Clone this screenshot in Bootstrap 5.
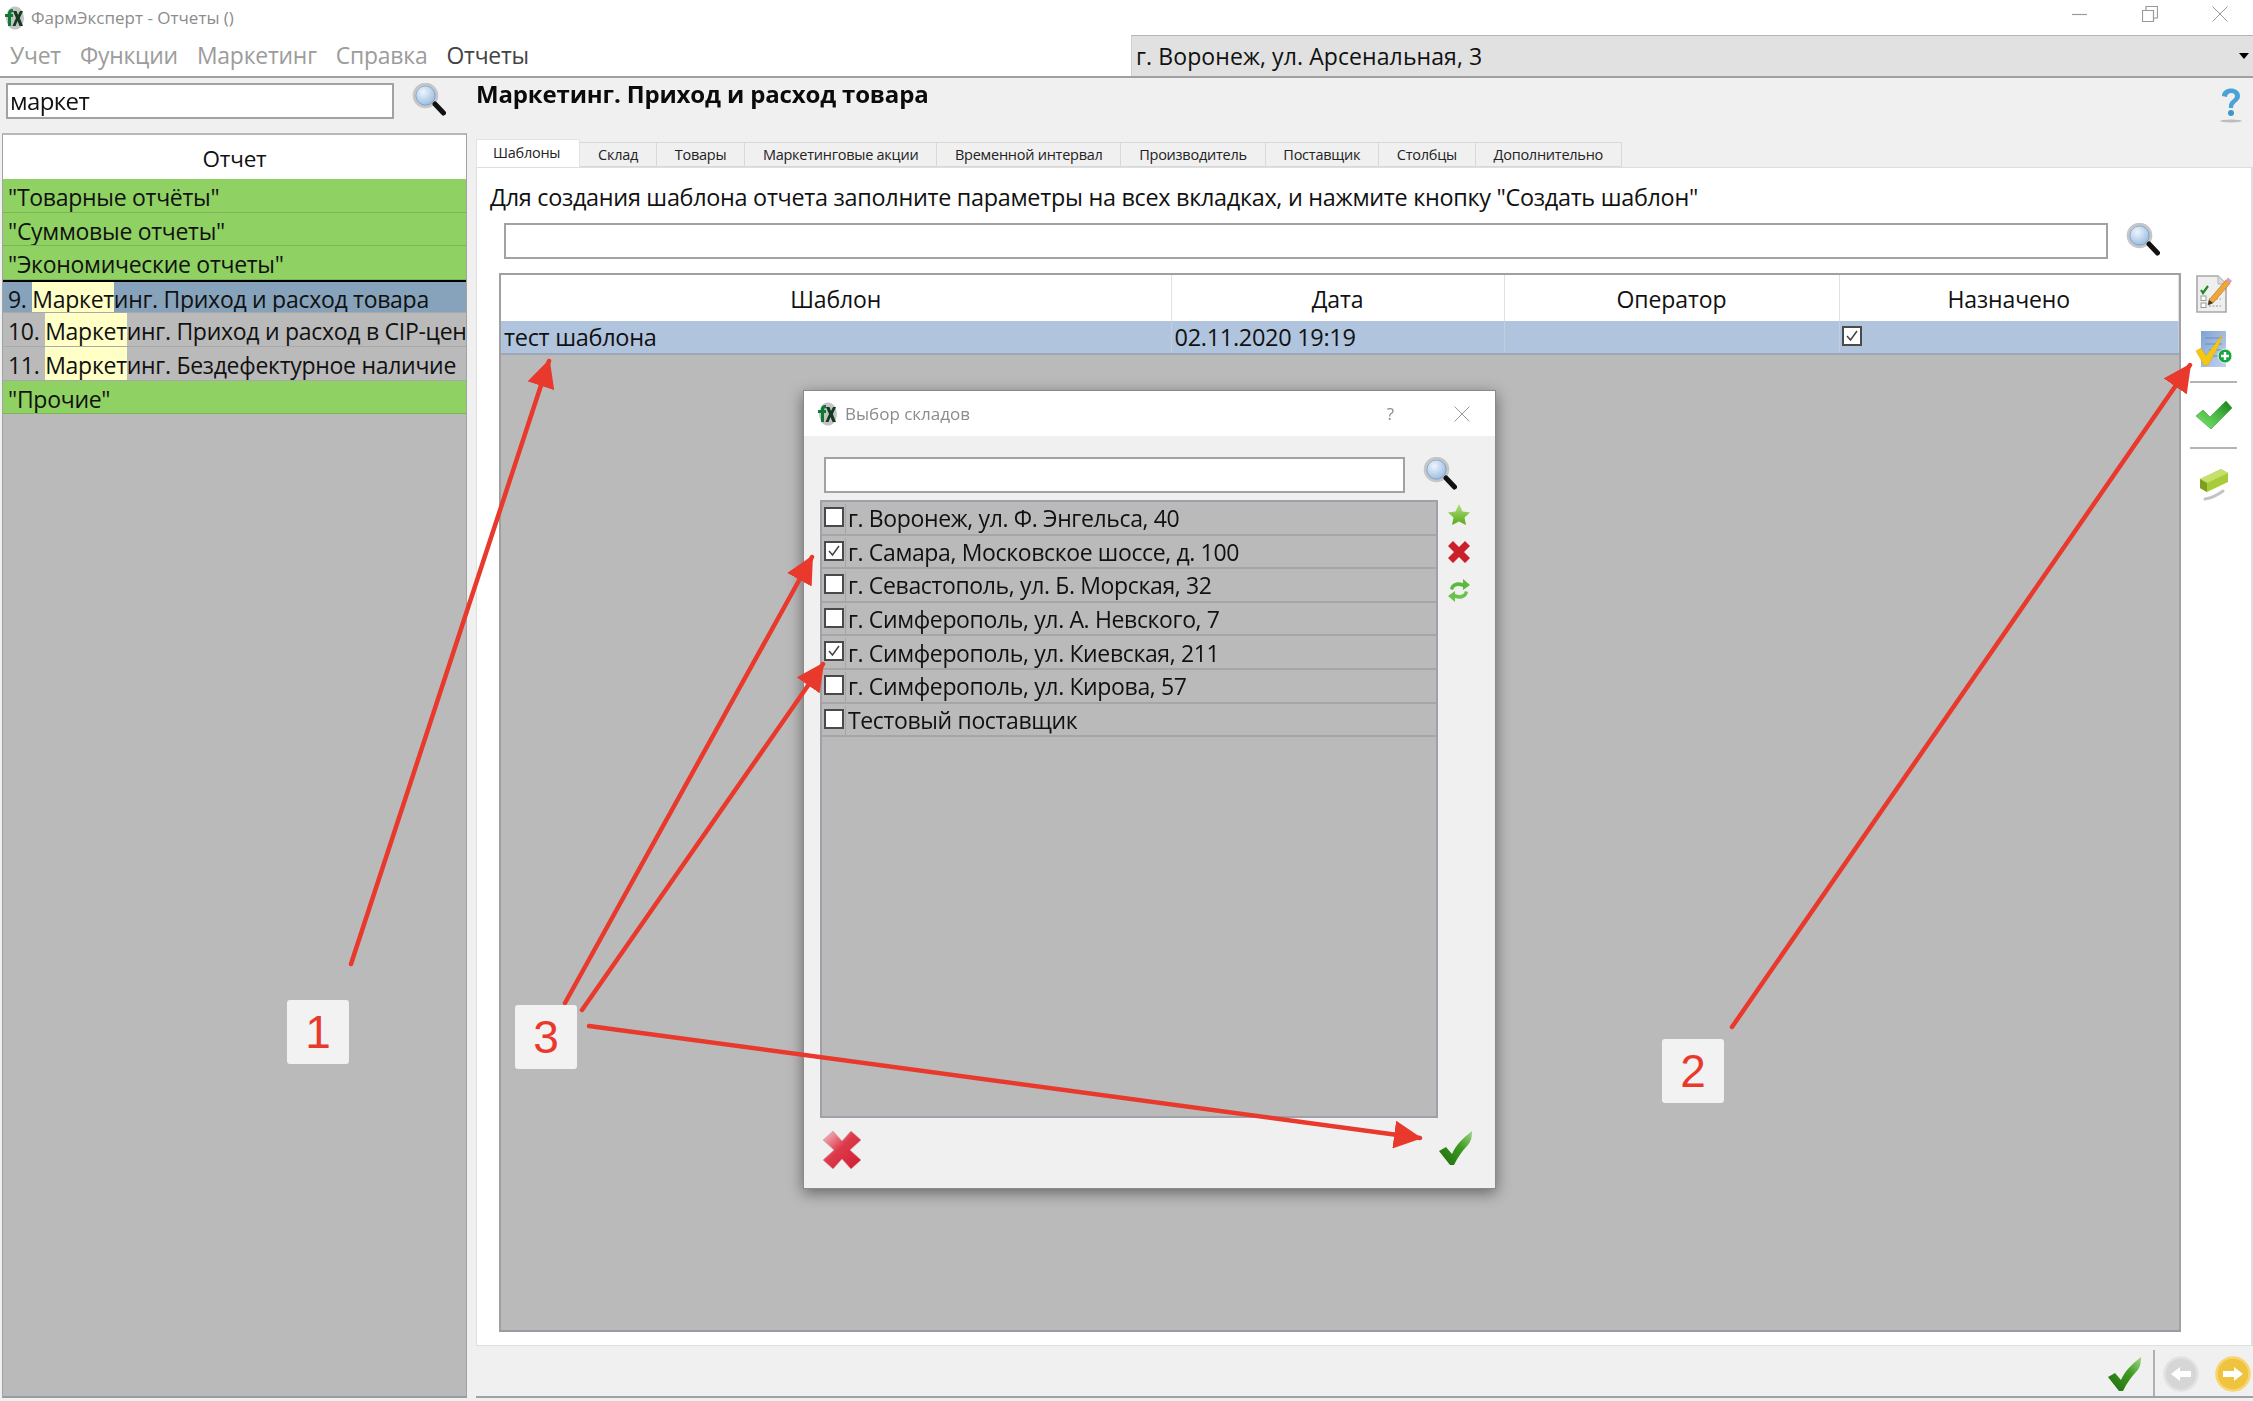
<!DOCTYPE html>
<html lang="ru">
<head>
<meta charset="utf-8">
<title>ФармЭксперт - Отчеты ()</title>
<link href="https://cdn.jsdelivr.net/npm/bootstrap@5.3.0/dist/css/bootstrap.min.css" rel="stylesheet">
<script src="https://cdn.jsdelivr.net/npm/bootstrap@5.3.0/dist/js/bootstrap.bundle.min.js"></script>
<style>
html,body{margin:0;background:#f0f0f0;overflow:hidden}
body{width:2253px;height:1401px;position:relative;font-family:"Open Sans","Noto Sans",sans-serif;color:#111;font-size:23px;letter-spacing:-.35px}
.win{width:2253px;height:1401px;filter:blur(.4px)}
.ttl{height:35px;background:#fff;padding-left:4px;color:#8c8c8c;font-size:17px;letter-spacing:0}
.ttl .logo{width:20px;height:24px;margin-right:7px}
.capbtn{width:16px;height:16px;display:block;margin-left:54px}
.capbtns{margin-right:25px;margin-top:-8px}
.menu-row{height:43px;background:#fff;border-bottom:2px solid #a0a0a0}
.menu-left{width:1131px;padding-left:10px;gap:19px;color:#9c9c9c;font-size:22.9px;letter-spacing:-.2px;padding-top:1px}
.menu-left .on{color:#444}
.combo{flex:1;background:#e1e1e1;padding-left:4px;font-size:23px;letter-spacing:.1px;color:#111;border-left:1px solid #d0d0d0;border-top:1px solid #b4b4b4}
.combo i{width:0;height:0;border:5px solid transparent;border-top:6px solid #000;border-bottom:0;margin-right:4px}
.side{width:468px;flex:none}
.side-top{height:55px;padding:5px 0 0 6px;gap:18px}
.inp{border:2px solid #a2a2a2;background:#fff;border-radius:0;height:36px;padding:0 2px;font-size:24px;color:#111;box-shadow:none;letter-spacing:-.6px}
.side-top .inp{width:388px}
.mag{width:34px;height:34px;flex:none;display:block}
.rep{margin:0 1px 0 2px;height:1265px;background:#bababa;border:1px solid #a2a2a2;border-bottom:2px solid #9a9aa2;border-radius:0;overflow:hidden;border-top:2px solid #b8b8b8;display:block}
.rep-h{height:44px;background:#fff;color:#111;text-align:center;font-size:22.5px;line-height:48px;letter-spacing:-.2px}
.rep .list-group-item{height:33.6px;line-height:36px;padding:0 0 0 5px;border:0;border-bottom:1px solid #a9a9a9;border-radius:0;background:#bababa;color:#111;white-space:nowrap;overflow:hidden;font-size:23px;letter-spacing:-.28px}
.rep .list-group-item.grp{background:#8fd162;border-bottom-color:#7db658}
.rep .list-group-item.sel{background:#87a3bb;border-top:2px solid #000;color:#111;line-height:34px}
.hl{background:#ffffc6;display:inline-block;height:33px;vertical-align:top}
.main{flex:1;min-width:0;padding-left:8px}
.head-row{height:61px}
.h-ttl{font-size:24px;font-weight:700;letter-spacing:-.15px;margin:0;line-height:24px;padding-top:4px;color:#0b0b0b}
.help{width:24px;height:36px;margin:9px 10px 0 0;display:block}
.tabs{border:0;height:28px;align-items:flex-end;background:transparent;flex-wrap:nowrap}
.tabs .nav-link{height:25px;margin:0;padding:0 17.8px;border:1px solid #d9d9d9;border-width:1px 1px 1px 0;border-radius:0;background:#f0f0f0;color:#222;font-size:14.5px;line-height:24px;letter-spacing:-.25px}
.tabs .nav-link.active{height:28px;background:#fff;border:1px solid #e3e3e3;border-bottom:0;color:#222;line-height:26px;padding:0 19px 0 16px}
.pane{height:1179px;background:#fff;border:1px solid #dedede;border-width:1px 2px 1px 1px;margin-top:0}
.hint{padding:14px 0 0 13px;font-size:23.4px;line-height:31px;letter-spacing:-.29px;height:55px;color:#111}
.srch{padding-left:27px;gap:18px;height:50px}
.srch .inp{width:1604px}
.grid-row{flex:1;min-height:0;padding-left:22px}
.gridbox{width:1682px;height:1059px;background:#bababa;border:2px solid #a0a0a0;border-bottom-color:#9a9aa2;border-right-color:#a0a0a6}
.tb{table-layout:fixed;margin:0;width:100%;--bs-table-bg:transparent;border-collapse:collapse;font-size:23.5px}
.tb th{height:46px;background:#fff;font-weight:400;text-align:center;vertical-align:middle;padding:2px 0 0;border:0;border-right:1px solid #e2e2e2;color:#111;letter-spacing:-.1px;font-size:23px;box-shadow:none}
.tb td{height:33px;padding:0 0 0 3px;background:#b0c4de;border:0;border-bottom:2px solid #9ca8b8;border-right:1px solid #c2cede;vertical-align:middle;color:#111;letter-spacing:-.3px;line-height:30px;box-shadow:none}
.tb td .ckb{margin:-2px 0 0 -1px}
.ckb{display:block;width:20px;height:20px;background:#fff;border:2px solid #4a4a4a;position:relative}
.ckb svg{display:block;width:16px;height:16px}
.tools{width:70px;align-items:center;padding:2px 5px 0 0}
.tools svg{display:block}
.tools hr{width:47px;margin:0;border:0;border-top:2px solid #b4b4b4;opacity:1}
.t-a{margin-top:17px}
.tools .t-h{margin-top:13px}
.t-c{margin:18px 0}
.tools .t-j{margin-top:0}
.t-e{margin-top:19px}
.foot{height:52px;border-bottom:2px solid #a0a0a8;padding:6px 2px 0 0}
.foot .vs{width:2px;height:46px;background:#b0b0b0;align-self:flex-end;margin:0 8px 0 11px}
.dlg{position:absolute;left:803px;top:390px;width:693px;height:799px;background:#f0f0f0;border:1px solid #8a8a8a;box-shadow:0 4px 14px rgba(0,0,0,.45);border-radius:0;z-index:5;filter:blur(.4px)}
.dlg-t{height:45px;background:#fff;color:#8c8c8c;font-size:17px;padding-left:13px;letter-spacing:0}
.dlg-t .logo{width:20px;height:24px;margin-right:8px}
.q{margin-right:60px}
.x-close{margin-right:25px}
.dlg-b{flex:1;padding:21px 0 0 16px}
.dlg-s{gap:18px;padding-left:4px;height:43px}
.dlg-s .inp{width:581px}
.dlg-m{gap:10px}
.wh{width:618px;height:618px;background:#bababa;border:2px solid #a0a0a8;display:block;border-radius:0}
.wh .list-group-item{height:33.6px;padding:2px 0 0;border:0;border-bottom:2px solid #a6a6a6;border-radius:0;background:transparent;color:#111;line-height:31px;white-space:nowrap;font-size:23px;letter-spacing:-.36px}
.wh .cc{width:24px;height:100%;border-right:1px solid #a6a6a6;padding:3px 0 0 2px;margin:0 2px 0 0;flex:none}
.wh-ic{gap:15px;padding-top:4px;width:24px}
.wh-ic svg{display:block}
.dlg-f{padding:13px 0 0 3px;width:653px}
.note{position:absolute;z-index:8;width:62px;height:64px;background:#f2f2f2;border-radius:3px;color:#e8392c;font-family:"Liberation Sans",Arial,sans-serif;font-size:46px;line-height:64px;text-align:center;letter-spacing:0}
.n1{left:287px;top:1000px}.n2{left:1662px;top:1039px}.n3{left:515px;top:1005px}
.arrows{position:absolute;left:0;top:0;z-index:7;pointer-events:none}
</style>
</head>
<body>
<svg width="0" height="0" style="position:absolute">
<defs>
<radialGradient id="gl" cx=".4" cy=".35" r=".7"><stop offset="0" stop-color="#eef5fc"/><stop offset="1" stop-color="#8db2dc"/></radialGradient>
<linearGradient id="gc" x1="0" y1="1" x2="1" y2="0"><stop offset="0" stop-color="#7fe86f"/><stop offset=".6" stop-color="#43b33f"/><stop offset="1" stop-color="#167a18"/></linearGradient>
<linearGradient id="gd" x1="0" y1="1" x2="1" y2="0"><stop offset="0" stop-color="#1b6a0c"/><stop offset=".6" stop-color="#3f9c20"/><stop offset="1" stop-color="#a4d68e"/></linearGradient>
<linearGradient id="gx" x1="0" y1="0" x2="1" y2="1"><stop offset="0" stop-color="#f6c8cf"/><stop offset=".45" stop-color="#dd3a4c"/><stop offset="1" stop-color="#d01c30"/></linearGradient>
<linearGradient id="gs" x1="0" y1="0" x2="0" y2="1"><stop offset="0" stop-color="#b3e27a"/><stop offset="1" stop-color="#58a81c"/></linearGradient>
<linearGradient id="gb" x1="0" y1="0" x2="1" y2="1"><stop offset="0" stop-color="#7ea3d0"/><stop offset="1" stop-color="#c3d2f2"/></linearGradient>
<symbol id="i-mag" viewBox="0 0 34 34"><circle cx="13.5" cy="12.5" r="11.5" fill="url(#gl)" stroke="#c6c6c6" stroke-width="2.6"/><circle cx="13.5" cy="12.5" r="9.6" fill="none" stroke="#7f9cc0" stroke-width=".8"/><path d="M23 21 L31.5 30" stroke="#111" stroke-width="5" stroke-linecap="round"/></symbol>
<symbol id="i-logo" viewBox="0 0 20 24"><ellipse cx="11" cy="12" rx="9" ry="11.5" fill="#c4c4c4"/><path d="M1 8 L4 8 C4 4 6 3 9 3 L9 6 C7.500 6 7 7 7 8 L9 8 L9 11 L7 11 L7 20 L4 20 L4 11 L1 11 Z" fill="#0e7a35"/><path d="M9 5 L12.500 5 L14 9 L16 5 L19 5 L15.800 12 L19 20 L15.500 20 L13.500 15 L11.500 20 L8.500 20 L12 12 Z" fill="#143a20"/></symbol>
<symbol id="i-chk" viewBox="0 0 36 28"><path d="M0 15 L7 9 L14 16 L30 0 L36 7 L15 28 Z" fill="url(#gc)" stroke="#3a9a38" stroke-width=".6"/></symbol>
<symbol id="i-chk2" viewBox="0 0 34 34"><path d="M0 20 L7 16 L13 23 C17 14 24 7 33 0 C33 7 32 11 28 15 C23 20 19 26 15 34 L11 34 Z" fill="url(#gd)"/></symbol>
<symbol id="i-x" viewBox="0 0 22 22"><path d="M0 5 L5 0 L11 6 L17 0 L22 5 L16 11 L22 17 L17 22 L11 16 L5 22 L0 17 L6 11 Z" fill="#cc1f2c"/></symbol>
<symbol id="i-xb" viewBox="0 0 38 38"><path d="M0 9 L10 0 L19 10 L28 0 L38 9 L27 19 L38 29 L28 38 L19 28 L10 38 L0 29 L11 19 Z" fill="url(#gx)" stroke="#c9a0a6" stroke-width=".6"/></symbol>
<symbol id="i-star" viewBox="0 0 22 22"><path d="M11 0 L14.500 7.500 L22 8.500 L16.500 13.500 L18 21 L11 17.500 L4 21 L5.500 13.500 L0 8.500 L7.500 7.500 Z" fill="url(#gs)"/></symbol>
<symbol id="i-ref" viewBox="0 0 22 25"><path d="M2 11 C3 5 9 3 15 5 L15 1 L22 7 L15 12 L15 9 C10 7 6 8 5 12 Z" fill="#5db83e"/><path d="M20 14 C19 20 13 22 7 20 L7 24 L0 18 L7 13 L7 16 C12 18 16 17 17 13 Z" fill="#6cc24a"/></symbol>
<symbol id="i-edit" viewBox="0 0 36 38"><path d="M1 1 L22 1 L30 9 L30 37 L1 37 Z" fill="#efefef" stroke="#a8a8a8" stroke-width="1.600"/><path d="M22 1 L22 9 L30 9" fill="#dcdcdc" stroke="#b2b2b2"/><path d="M5 15 L7 18 L12 11" fill="none" stroke="#1d8a1f" stroke-width="2.200"/><rect x="5" y="21" width="5" height="4.500" fill="#fff" stroke="#999"/><rect x="5" y="28" width="5" height="4.500" fill="#fff" stroke="#999"/><path d="M13 24 H25 M13 31 H25" stroke="#999" stroke-dasharray="2 1.500"/><path d="M13 25 L30 5 L34 8.500 L17 28 L12 30 Z" fill="#f0a73a" stroke="#a8701c" stroke-width=".6"/><path d="M30 5 L32 2.500 L36 6 L34 8.500 Z" fill="#d89ac8"/><path d="M12 30 L13 25 L17 28 Z" fill="#333"/></symbol>
<symbol id="i-add" viewBox="0 0 36 38"><path d="M5 1 L30 1 L30 37 L5 37 Z" fill="url(#gb)"/><path d="M9 8 H26 M9 14 H26 M13 20 H26 M17 26 H26" stroke="#6d8db8"/><path d="M0 21 L5 18 L10 26 L26 5 C25 13 18 24 12 35 L8 35 Z" fill="#f5c715" stroke="#e0a800" stroke-width=".5"/><circle cx="29" cy="26" r="7" fill="#19a53d" stroke="#e9f8ec"/><path d="M25 26 H33 M29 22 V30" stroke="#fff" stroke-width="2.400"/></symbol>
<symbol id="i-erase" viewBox="0 0 30 33"><path d="M1 11 L22 1 L29 5 L29 14 L8 24 L1 20 Z" fill="#a8cc38"/><path d="M1 11 L22 1 L29 5 L8 15 Z" fill="#c6e070"/><path d="M1 11 L8 15 L8 24 L1 20 Z" fill="#7da020"/><path d="M6 31 C12 30 20 26 24 23" stroke="#c4c4c4" stroke-width="3" fill="none" stroke-linecap="round"/></symbol>
<marker id="ah" markerUnits="userSpaceOnUse" markerWidth="28" markerHeight="28" refX="26" refY="14" orient="auto"><path d="M0 0 L28 14 L0 28 Z" fill="#e8392c"/></marker>
</defs>
</svg>

<div class="win d-flex flex-column">
  <div class="ttl d-flex align-items-center">
    <svg class="logo"><use href="#i-logo"/></svg><span>ФармЭксперт - Отчеты ()</span>
    <div class="capbtns d-flex ms-auto align-items-center">
      <svg class="capbtn" viewBox="0 0 16 16"><path d="M0 8.500 H15" stroke="#9a9a9a" stroke-width="1.200"/></svg>
      <svg class="capbtn" viewBox="0 0 16 16"><path d="M.5 4.500 H11.500 V15.500 H.5 Z M4 4.500 V.5 H15.500 V12 H11.500" fill="none" stroke="#9a9a9a" stroke-width="1.200"/></svg>
      <svg class="capbtn" viewBox="0 0 16 16"><path d="M.5 .5 L15.500 15.500 M15.500 .5 L.5 15.500" stroke="#9a9a9a" stroke-width="1"/></svg>
    </div>
  </div>
  <div class="menu-row d-flex">
    <div class="menu-left d-flex align-items-center"><span>Учет</span><span>Функции</span><span>Маркетинг</span><span>Справка</span><span class="on">Отчеты</span></div>
    <div class="combo d-flex align-items-center justify-content-between"><span>г. Воронеж, ул. Арсенальная, 3</span><i class="d-block"></i></div>
  </div>
  <div class="d-flex flex-grow-1">
    <aside class="side d-flex flex-column">
      <div class="side-top d-flex">
        <input class="form-control inp" type="text" value="маркет">
        <svg class="mag"><use href="#i-mag"/></svg>
      </div>
      <div class="list-group rep">
        <div class="rep-h">Отчет</div>
        <div class="list-group-item grp">"Товарные отчёты"</div>
        <div class="list-group-item grp">"Суммовые отчеты"</div>
        <div class="list-group-item grp">"Экономические отчеты"</div>
        <div class="list-group-item sel">9. <span class="hl">Маркет</span>инг. Приход и расход товара</div>
        <div class="list-group-item">10. <span class="hl">Маркет</span>инг. Приход и расход в CIP-ценах</div>
        <div class="list-group-item">11. <span class="hl">Маркет</span>инг. Бездефектурное наличие</div>
        <div class="list-group-item grp">"Прочие"</div>
      </div>
    </aside>
    <section class="main d-flex flex-column">
      <div class="head-row d-flex justify-content-between">
        <h1 class="h-ttl">Маркетинг. Приход и расход товара</h1>
        <svg class="help" viewBox="0 0 24 36"><path d="M3 9 C3 -1 21 -1 21 9 C21 15 14 15 14 21 L10 21 C9 13 16 13 16 9 C16 5 8 5 8 10 Z" fill="#4aa3d6"/><circle cx="12" cy="26" r="3" fill="#3c97cd"/><ellipse cx="12" cy="34" rx="11" ry="1.500" fill="#bdbdbd"/></svg>
      </div>
      <ul class="nav nav-tabs tabs">
        <li class="nav-item"><a class="nav-link active" href="#">Шаблоны</a></li>
        <li class="nav-item"><a class="nav-link" href="#">Склад</a></li>
        <li class="nav-item"><a class="nav-link" href="#">Товары</a></li>
        <li class="nav-item"><a class="nav-link" href="#">Маркетинговые акции</a></li>
        <li class="nav-item"><a class="nav-link" href="#">Временной интервал</a></li>
        <li class="nav-item"><a class="nav-link" href="#">Производитель</a></li>
        <li class="nav-item"><a class="nav-link" href="#">Поставщик</a></li>
        <li class="nav-item"><a class="nav-link" href="#">Столбцы</a></li>
        <li class="nav-item"><a class="nav-link" href="#">Дополнительно</a></li>
      </ul>
      <div class="pane d-flex flex-column">
        <div class="hint">Для создания шаблона отчета заполните параметры на всех вкладках, и нажмите кнопку "Создать шаблон"</div>
        <div class="srch d-flex"><input class="form-control inp" type="text"><svg class="mag"><use href="#i-mag"/></svg></div>
        <div class="grid-row d-flex">
          <div class="gridbox">
            <table class="table tb">
              <colgroup><col style="width:670px"><col style="width:333px"><col style="width:335px"><col></colgroup>
              <thead><tr><th>Шаблон</th><th>Дата</th><th>Оператор</th><th>Назначено</th></tr></thead>
              <tbody><tr><td>тест шаблона</td><td>02.11.2020 19:19</td><td></td><td><span class="ckb"><svg viewBox="0 0 16 16"><path d="M3 8 L6.500 12 L13 3" fill="none" stroke="#444" stroke-width="1.500"/></svg></span></td></tr></tbody>
            </table>
          </div>
          <div class="tools d-flex flex-column">
            <svg width="36" height="38"><use href="#i-edit"/></svg>
            <svg class="t-a" width="36" height="38"><use href="#i-add"/></svg>
            <hr class="t-h">
            <svg class="t-c" width="36" height="28" ><use href="#i-chk"/></svg>
            <hr class="t-j">
            <svg class="t-e" width="30" height="33"><use href="#i-erase"/></svg>
          </div>
        </div>
      </div>
      <div class="foot d-flex align-items-center justify-content-end">
        <svg width="34" height="34"><use href="#i-chk2"/></svg>
        <div class="vs"></div>
        <svg width="36" height="36" viewBox="0 0 36 36"><circle cx="18" cy="18" r="16.500" fill="#d6d6d6" stroke="#e2e2e2" stroke-width="2.500"/><path d="M8 18 L17 11 V15 H28 V21 H17 V25 Z" fill="#fff"/></svg>
        <svg class="ms-3" width="36" height="36" viewBox="0 0 36 36"><circle cx="18" cy="18" r="16.500" fill="#f0c33f" stroke="#f6d670" stroke-width="2.500"/><path d="M28 18 L19 11 V15 H8 V21 H19 V25 Z" fill="#fff"/></svg>
      </div>
    </section>
  </div>
</div>

<div class="dlg d-flex flex-column">
  <div class="dlg-t d-flex align-items-center">
    <svg class="logo"><use href="#i-logo"/></svg><span>Выбор складов</span>
    <span class="ms-auto q">?</span>
    <svg class="x-close" width="16" height="16" viewBox="0 0 16 16"><path d="M.5 .5 L15.500 15.500 M15.500 .5 L.5 15.500" stroke="#9a9a9a"/></svg>
  </div>
  <div class="dlg-b d-flex flex-column">
    <div class="dlg-s d-flex"><input class="form-control inp" type="text"><svg class="mag"><use href="#i-mag"/></svg></div>
    <div class="dlg-m d-flex">
      <div class="list-group wh">
        <div class="list-group-item d-flex align-items-center"><div class="cc"><span class="ckb"></span></div>г. Воронеж, ул. Ф. Энгельса, 40</div>
        <div class="list-group-item d-flex align-items-center"><div class="cc"><span class="ckb"><svg viewBox="0 0 16 16"><path d="M3 8 L6.500 12 L13 3" fill="none" stroke="#444" stroke-width="1.500"/></svg></span></div>г. Самара, Московское шоссе, д. 100</div>
        <div class="list-group-item d-flex align-items-center"><div class="cc"><span class="ckb"></span></div>г. Севастополь, ул. Б. Морская, 32</div>
        <div class="list-group-item d-flex align-items-center"><div class="cc"><span class="ckb"></span></div>г. Симферополь, ул. А. Невского, 7</div>
        <div class="list-group-item d-flex align-items-center"><div class="cc"><span class="ckb"><svg viewBox="0 0 16 16"><path d="M3 8 L6.500 12 L13 3" fill="none" stroke="#444" stroke-width="1.500"/></svg></span></div>г. Симферополь, ул. Киевская, 211</div>
        <div class="list-group-item d-flex align-items-center"><div class="cc"><span class="ckb"></span></div>г. Симферополь, ул. Кирова, 57</div>
        <div class="list-group-item d-flex align-items-center"><div class="cc"><span class="ckb"></span></div>Тестовый поставщик</div>
      </div>
      <div class="wh-ic d-flex flex-column">
        <svg width="22" height="22"><use href="#i-star"/></svg>
        <svg width="22" height="22"><use href="#i-x"/></svg>
        <svg width="22" height="25"><use href="#i-ref"/></svg>
      </div>
    </div>
    <div class="dlg-f d-flex justify-content-between">
      <svg width="38" height="38"><use href="#i-xb"/></svg>
      <svg width="34" height="34"><use href="#i-chk2"/></svg>
    </div>
  </div>
</div>

<svg class="arrows" width="2253" height="1401">
  <g stroke="#e8392c" stroke-width="4.500" fill="none" stroke-linecap="round">
    <path d="M351 964 L549 361" marker-end="url(#ah)"/>
    <path d="M1732 1027 L2190 365" marker-end="url(#ah)"/>
    <path d="M565 1003 L812 557" marker-end="url(#ah)"/>
    <path d="M582 1010 L823 664" marker-end="url(#ah)"/>
    <path d="M589 1026 L1420 1138" marker-end="url(#ah)"/>
  </g>
</svg>
<div class="note n1">1</div>
<div class="note n2">2</div>
<div class="note n3">3</div>
</body>
</html>
